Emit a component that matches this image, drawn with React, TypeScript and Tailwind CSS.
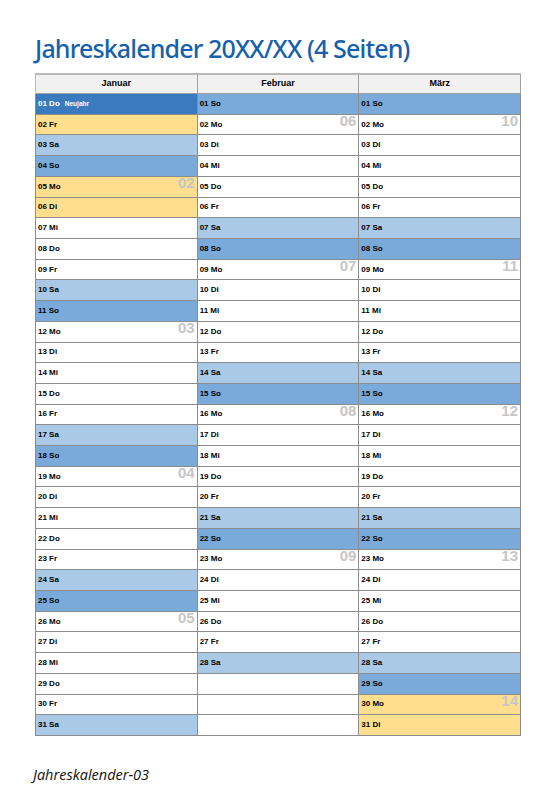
import React from "react";

type Cell = { d?: string; kind?: "hol" | "yel" | "sat" | "sun" | "none"; wk?: string; note?: string };

const days = ["Mo", "Di", "Mi", "Do", "Fr", "Sa", "So"];

function month(startIdx: number, len: number, special: Record<number, "hol" | "yel">, notes: Record<number, string> = {}): Cell[] {
  const out: Cell[] = [];
  for (let i = 1; i <= 31; i++) {
    if (i > len) {
      out.push({});
      continue;
    }
    const di = (startIdx + i - 1) % 7;
    const dn = days[di];
    let kind: Cell["kind"] = "none";
    if (dn === "Sa") kind = "sat";
    if (dn === "So") kind = "sun";
    if (special[i]) kind = special[i];
    out.push({ d: `${String(i).padStart(2, "0")} ${dn}`, kind, note: notes[i] });
  }
  return out;
}

const jan = month(3, 31, { 1: "hol", 2: "yel", 5: "yel", 6: "yel" }, { 1: "Neujahr" });
const feb = month(6, 28, {});
const mar = month(6, 31, { 30: "yel", 31: "yel" });

function addWeeks(cells: Cell[], wks: Record<number, string>) {
  Object.entries(wks).forEach(([k, v]) => {
    cells[Number(k) - 1].wk = v;
  });
}
addWeeks(jan, { 5: "02", 12: "03", 19: "04", 26: "05" });
addWeeks(feb, { 2: "06", 9: "07", 16: "08", 23: "09" });
addWeeks(mar, { 2: "10", 9: "11", 16: "12", 23: "13", 30: "14" });

const bg: Record<string, string> = {
  hol: "bg-[#3a7bbf] text-white",
  yel: "bg-[#ffdf8d] text-black",
  sat: "bg-[#a9c9e7] text-black",
  sun: "bg-[#7aaada] text-black",
  none: "bg-white text-black",
};

function Col({ cells }: { cells: Cell[] }) {
  return (
    <div className="grid grid-rows-[repeat(31,minmax(0,1fr))] border-r border-[#8c8c8c]">
      {cells.map((c, i) => (
        <div
          key={i}
          className={`relative flex items-center border-b border-[#8c8c8c] pl-[2px] text-[8px] font-bold ${bg[c.kind ?? "none"]}`}
        >
          {c.d && <span>{c.d}</span>}
          {c.note && <span className="ml-[5px] text-[6.5px] font-bold">{c.note}</span>}
          {c.wk && (
            <span className="absolute right-[2px] top-[-2px] text-[15px] font-bold leading-none text-[#c6c6c6]">
              {c.wk}
            </span>
          )}
        </div>
      ))}
    </div>
  );
}

export default function App() {
  return (
    <div className="relative h-[794px] w-[559px] bg-white" style={{ fontFamily: '"Liberation Sans", Arial, sans-serif' }}>
      <div
        className="pl-[35px] pt-[31px] text-[25px] font-medium leading-[34px] tracking-[-0.85px] text-[#1761ac]"
        style={{ fontFamily: '"Noto Sans", sans-serif' }}
      >
        Jahreskalender 20XX/XX (4 Seiten)
      </div>
      <div className="ml-[35px] mt-[8px] w-[486px]">
        <div className="grid h-[21px] grid-cols-3 border-t-2 border-l border-[#b9b9b9] bg-[#f1f1f1]">
          {["Januar", "Februar", "März"].map((m) => (
            <div key={m} className="flex items-center justify-center border-r border-b border-[#a0a0a0] text-[9px] font-bold text-black">
              {m}
            </div>
          ))}
        </div>
        <div className="grid h-[642px] grid-cols-3 border-l border-[#8c8c8c]">
          <Col cells={jan} />
          <Col cells={feb} />
          <Col cells={mar} />
        </div>
      </div>
      <div
        className="absolute left-[33px] top-[764px] text-[14.5px] italic text-[#111]"
        style={{ fontFamily: '"Open Sans", sans-serif' }}
      >
        Jahreskalender-03
      </div>
    </div>
  );
}
